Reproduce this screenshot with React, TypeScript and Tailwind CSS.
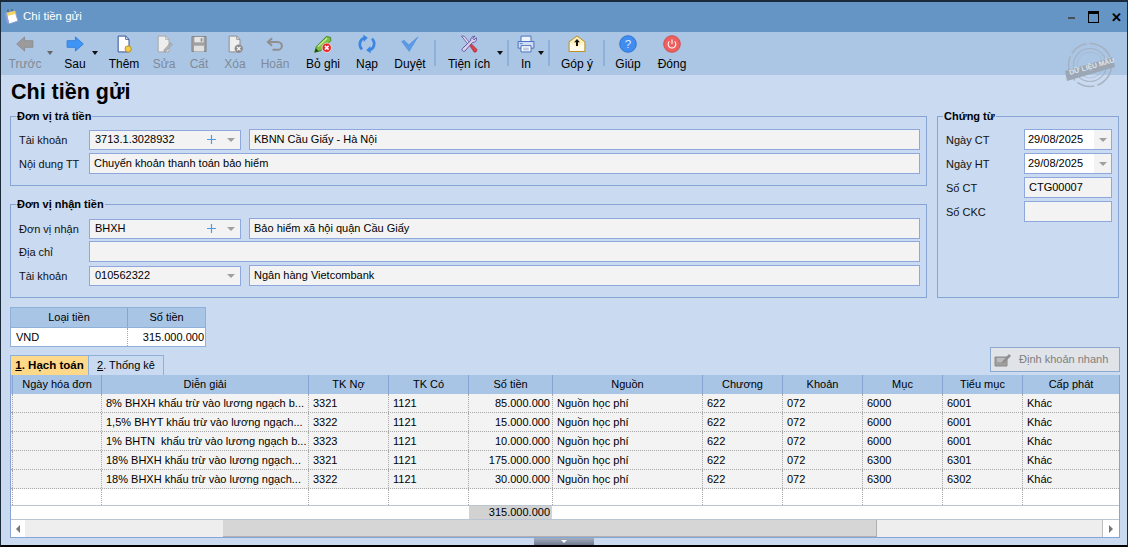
import type { ReactNode } from 'react';

const font = "[font-family:'Liberation_Sans',Arial,sans-serif]";

const Svg = ({ children }: { children: ReactNode }) => (
  <svg width="20" height="20" viewBox="0 0 24 24" fill="none">
    {children}
  </svg>
);

const icons: Record<string, ReactNode> = {
  prev: <Svg><path d="M2 12 11.5 3.5V8H21.5V16H11.5V20.5Z" fill="#9b9b9b" stroke="#8a8a8a" /></Svg>,
  next: <Svg><path d="M22 12 12.5 3.5V8H2.5V16H12.5V20.5Z" fill="#3f95f5" stroke="#2b7bd8" /></Svg>,
  add: (
    <Svg>
      <path d="M5 2.5H14L18 6.5V21.5H5Z" fill="#fff" stroke="#34509a" strokeWidth="1.2" />
      <path d="M14 2.5V6.5H18" stroke="#34509a" />
      <circle cx="17" cy="18" r="3.8" fill="#f4cb4c" stroke="#a98a20" />
    </Svg>
  ),
  edit: (
    <Svg>
      <path d="M5 2.5H14L18 6.5V21.5H5Z" fill="#eeeeee" stroke="#a8a8a8" strokeWidth="1.2" />
      <path d="M14 2.5V6.5H18" stroke="#a8a8a8" />
      <path d="M12 19 20 10.5 22 12.5 14 21H12Z" fill="#b5b5b5" stroke="#8f8f8f" strokeWidth=".7" />
    </Svg>
  ),
  save: (
    <Svg>
      <path d="M3.5 3H20.5V21H3.5Z" fill="#a0a0a0" stroke="#7e7e7e" />
      <path d="M6.5 3.5H17.5V10H6.5Z" fill="#e6e6e6" />
      <path d="M6 14H18V21H6Z" fill="#e0e0e0" />
      <path d="M14 5H16V9H14Z" fill="#8a8a8a" />
    </Svg>
  ),
  del: (
    <Svg>
      <path d="M5 2.5H14L18 6.5V21.5H5Z" fill="#eeeeee" stroke="#8d8d8d" strokeWidth="1.2" />
      <path d="M14 2.5V6.5H18" stroke="#8d8d8d" />
      <circle cx="16.5" cy="17.5" r="5" fill="#8c8c8c" />
      <path d="M14.4 15.4 18.6 19.6M18.6 15.4 14.4 19.6" stroke="#fff" strokeWidth="1.4" />
    </Svg>
  ),
  undo: (
    <Svg>
      <path d="M8.5 5 3.5 9.5 8.5 14" stroke="#8f8f8f" strokeWidth="2.4" />
      <path d="M4.5 9.5H15C22 9.5 22 19 15 19H9" stroke="#8f8f8f" strokeWidth="2.4" />
    </Svg>
  ),
  cancel: (
    <Svg>
      <path d="M2 22 4 15 16 3 21 4 21.5 8 9.5 20Z" fill="#7cc142" stroke="#3f7a1d" strokeWidth="1" />
      <path d="M6 15 17 5" stroke="#cdeb9f" strokeWidth="1.5" />
      <path d="M2 22 3.4 17 7 20.6Z" fill="#26450f" />
      <circle cx="16.5" cy="16.5" r="5.6" fill="#e8202a" stroke="#fff" strokeWidth=".8" />
      <path d="M14.3 14.3 18.7 18.7M18.7 14.3 14.3 18.7" stroke="#fff" strokeWidth="1.9" />
    </Svg>
  ),
  reload: (
    <Svg>
      <path d="M6 18.5C1.5 14 3 7 8.5 4.8" stroke="#3b86e3" strokeWidth="3.2" />
      <path d="M7.5 1 13 4.5 8 9.5Z" fill="#3b86e3" />
      <path d="M18 5.5C22.5 10 21 17 15.5 19.2" stroke="#3b86e3" strokeWidth="3.2" />
      <path d="M16.5 23 11 19.5 16 14.5Z" fill="#3b86e3" />
    </Svg>
  ),
  check: <Svg><path d="M2 9 5 7.5 10.5 13 21.5 3.5 11 21Z" fill="#5a9ae6" stroke="#4a88d6" strokeWidth=".6" /></Svg>,
  tools: (
    <Svg>
      <path d="M3 2.5 6 2.5 13 10.5 11 12.5Z" fill="#e6e0f6" stroke="#564291" strokeWidth=".9" />
      <path d="M19 2.5 16.5 5.5 18 7 20.8 4.5C22 8 19 10.5 16.5 10L7 20.5C5.5 22 2.5 19.5 4 17.5L14 8C13.5 5 16 2.5 19 2.5Z" fill="#d9cff0" stroke="#564291" strokeWidth="1" />
      <path d="M13 14 15 12 21.5 18.5C22 21 19.5 22.5 18 21.5Z" fill="#df3f4a" stroke="#8f2029" strokeWidth=".7" />
    </Svg>
  ),
  print: (
    <Svg>
      <path d="M6 2.5H18V9H6Z" fill="#eef3fc" stroke="#4b72c0" strokeWidth="1.2" />
      <path d="M2.5 9H21.5V17H2.5Z" fill="#cfdcf3" stroke="#4b72c0" strokeWidth="1.2" />
      <path d="M6 14H18V21.5H6Z" fill="#fff" stroke="#4b72c0" strokeWidth="1.2" />
      <path d="M8.5 17H15.5M8.5 19H15.5" stroke="#8aa0c8" />
      <path d="M4.5 11.5H8" stroke="#4b72c0" />
    </Svg>
  ),
  feedback: (
    <Svg>
      <path d="M2.5 9.5 12 2.5 21.5 9.5V21H2.5Z" fill="#fffbe8" stroke="#bd9428" strokeWidth="1.3" />
      <path d="M3.5 9.8 12 3.6 20.5 9.8 12 15.5Z" fill="#fff1b8" />
      <path d="M12 6 15.5 10H13.2V14.5H10.8V10H8.5Z" fill="#111" />
    </Svg>
  ),
  help: (
    <Svg>
      <circle cx="12" cy="12" r="10" fill="#3f8df0" stroke="#2b6dc4" />
      <text x="12" y="17" textAnchor="middle" fontSize="14" fill="#dbeaff" fontFamily="Liberation Sans">?</text>
    </Svg>
  ),
  close: (
    <Svg>
      <circle cx="12" cy="12" r="10" fill="#ee5f5f" stroke="#d04545" />
      <path d="M8.8 8.8A4.6 4.6 0 1 0 15.2 8.8" stroke="#fff" strokeWidth="1.3" />
      <path d="M12 6.5V12" stroke="#fff" strokeWidth="1.3" />
    </Svg>
  ),
};

const Caret = ({ className, off }: { className: string; off?: boolean }) => (
  <div className={`flex justify-center pt-[19px] ${className}`}>
    <div className={`h-0 w-0 border-x-[3.5px] border-t-[4px] border-x-transparent ${off ? 'border-t-[#666]' : 'border-t-[#111]'}`} />
  </div>
);

const Sep = ({ className = '' }: { className?: string }) => (
  <div className={`my-[8px] h-[26px] w-[2px] bg-[#8fb0d8] ${className}`} />
);

const ToolButton = ({ icon, label, off, className }: { icon: string; label: string; off?: boolean; className: string }) => (
  <div className={`flex flex-col items-center ${className}`}>
    <div className="flex h-[24px] items-center justify-center">{icons[icon]}</div>
    <span className={`mt-[1px] text-[12px] leading-[14px] whitespace-nowrap ${off ? 'text-[#7f8a96]' : 'text-black'}`}>{label}</span>
  </div>
);

const Stamp = () => (
  <div className="absolute left-[1063px] top-[40px] h-[46px] w-[52px]">
    <svg width="52" height="46" viewBox="0 0 52 46" fill="none">
      <circle cx="26" cy="23" r="21.5" stroke="#a3adba" strokeWidth="1.5" strokeDasharray="26 3 18 3" opacity=".85" />
      <circle cx="26" cy="23" r="16.5" stroke="#a3adba" strokeWidth="1.2" opacity=".8" />
      <circle cx="26" cy="23" r="13" stroke="#a3adba" strokeWidth=".8" opacity=".6" />
      <path d="M1 29 49 15 51 25 3 39Z" fill="#9ca7b5" />
      <text x="6" y="33" transform="rotate(-16 6 33)" fontSize="7" fontWeight="700" fill="#dfe5ec" fontFamily="Liberation Sans">DỮ LIỆU MẪU</text>
    </svg>
  </div>
);

const Input = ({ value = '', className = '' }: { value?: string; className?: string }) => (
  <div className={`flex h-[21px] items-center border border-[#8ea7dd] bg-[#f3f3f3] pl-[4px] text-[11px] text-black ${className}`}>{value}</div>
);

const Combo = ({ value, plus }: { value: string; plus?: boolean }) => (
  <div className="flex h-[20px] w-[152px] items-center border border-[#8ea7dd] bg-[#f3f3f3] pl-[5px] text-[11px]">
    <span className="flex-1">{value}</span>
    {plus && (
      <svg width="9" height="9" viewBox="0 0 9 9" className="mr-[11px]">
        <path d="M4.5 0V9M0 4.5H9" stroke="#4f9be3" strokeWidth="1.2" />
      </svg>
    )}
    <div className="mr-[5px] h-0 w-0 border-x-[4px] border-t-[4px] border-x-transparent border-t-[#a0a0a0]" />
  </div>
);

const Label = ({ children, className = 'w-[70px]' }: { children: ReactNode; className?: string }) => (
  <span className={`shrink-0 whitespace-nowrap pt-[2px] text-[11px] text-[#111] ${className}`}>{children}</span>
);

const Group = ({ title, className, children }: { title: string; className: string; children: ReactNode }) => (
  <fieldset className={`border border-[#86a5d5] ${className}`}>
    <legend className="ml-[-3px] h-[14px] px-[1px] text-[11px] font-bold leading-[14px] text-black">{title}</legend>
    {children}
  </fieldset>
);

const DateBox = ({ value }: { value: string }) => (
  <div className="flex h-[21px] w-[88px] items-center border border-[#8ea7dd] bg-white text-[11px]">
    <span className="flex h-full flex-1 items-center pl-[3px]">{value}</span>
    <div className="flex h-full w-[17px] items-center justify-center bg-[#f3f3f3]">
      <div className="h-0 w-0 border-x-[4px] border-t-[4px] border-x-transparent border-t-[#a0a0a0]" />
    </div>
  </div>
);

const columns = [
  { title: 'Ngày hóa đơn', width: 'w-[89px]' },
  { title: 'Diễn giải', width: 'w-[207px]' },
  { title: 'TK Nợ', width: 'w-[80px]' },
  { title: 'TK Có', width: 'w-[80px]' },
  { title: 'Số tiền', width: 'w-[84px]', right: true },
  { title: 'Nguồn', width: 'w-[150px]' },
  { title: 'Chương', width: 'w-[80px]' },
  { title: 'Khoản', width: 'w-[80px]' },
  { title: 'Mục', width: 'w-[80px]' },
  { title: 'Tiểu mục', width: 'w-[80px]' },
  { title: 'Cấp phát', width: 'w-[96px]' },
];

const rows = [
  ['', '8% BHXH khấu trừ vào lương ngạch b...', '3321', '1121', '85.000.000', 'Nguồn học phí', '622', '072', '6000', '6001', 'Khác'],
  ['', '1,5% BHYT khấu trừ vào lương ngạch...', '3322', '1121', '15.000.000', 'Nguồn học phí', '622', '072', '6000', '6001', 'Khác'],
  ['', '1% BHTN  khấu trừ vào lương ngạch b...', '3323', '1121', '10.000.000', 'Nguồn học phí', '622', '072', '6000', '6001', 'Khác'],
  ['', '18% BHXH khấu trừ vào lương ngạch...', '3321', '1121', '175.000.000', 'Nguồn học phí', '622', '072', '6300', '6301', 'Khác'],
  ['', '18% BHXH khấu trừ vào lương ngạch...', '3322', '1121', '30.000.000', 'Nguồn học phí', '622', '072', '6300', '6302', 'Khác'],
];

const GridRow = ({ cells, blank }: { cells: string[]; blank?: boolean }) => (
  <div className={`flex border-b border-dotted border-[#a8a8a8] ${blank ? 'h-[16px] border-b-0 bg-white' : 'h-[19px] bg-[#f3f3f3]'}`}>
    <div className="w-[2px] shrink-0 border-r border-dotted border-[#a8a8a8]" />
    {columns.map((col, i) => (
      <div
        key={col.title}
        className={`flex shrink-0 items-center overflow-hidden whitespace-pre border-r border-dotted border-[#a8a8a8] pl-[4px] pt-[1px] text-[11px] text-black ${col.width} ${col.right ? 'justify-end pr-[2px]' : 'pr-[1px]'} ${i === columns.length - 1 ? 'border-r-0' : ''}`}
      >
        {cells[i]}
      </div>
    ))}
  </div>
);

export default function App() {
  return (
    <div className={`relative flex h-[547px] w-[1128px] flex-col overflow-hidden border-x border-t-2 border-b-2 border-x-[#1b2a3a] border-t-[#1b2a3a] border-b-black bg-[#c9daf1] ${font}`}>
      {/* Title bar */}
      <div className="flex h-[30px] shrink-0 items-center bg-[#6495c5] pl-[3px] pr-[5px]">
        <svg width="15" height="16" viewBox="0 0 15 16" fill="none">
          <path d="M2 4 11 2 14 12 5 15Z" fill="#fff" stroke="#8b9fd0" />
          <path d="M2 4 11 2 11.8 5 2.8 7Z" fill="#f3d65f" />
          <path d="M3 14 1 5 3 4 5 15Z" fill="#8f9fdc" />
          <path d="M4 3V0.5M8 2V0" stroke="#4a4f68" />
        </svg>
        <span className="ml-[4px] flex-1 text-[11.5px] text-white">Chi tiền gửi</span>
        <div className="mr-[13px] mt-[1px] h-[2px] w-[7px] bg-[#4a4f58]" />
        <div className="mr-[12px] h-[12px] w-[11px] border border-t-[3px] border-black" />
        <span className="text-[13px] font-bold leading-none text-black">✕</span>
      </div>

      {/* Toolbar */}
      <div className="flex h-[43px] shrink-0 bg-[#abc6e5] pl-[4px]">
        <ToolButton icon="prev" label="Trước" off className="w-[40px]" />
        <Caret off className="w-[10px]" />
        <ToolButton icon="next" label="Sau" className="ml-[5px] w-[30px]" />
        <Caret className="w-[10px]" />
        <ToolButton icon="add" label="Thêm" className="w-[48px]" />
        <ToolButton icon="edit" label="Sửa" off className="w-[32px]" />
        <ToolButton icon="save" label="Cất" off className="w-[38px]" />
        <ToolButton icon="del" label="Xóa" off className="w-[34px]" />
        <ToolButton icon="undo" label="Hoãn" off className="w-[46px]" />
        <ToolButton icon="cancel" label="Bỏ ghi" className="w-[50px]" />
        <ToolButton icon="reload" label="Nạp" className="w-[38px]" />
        <ToolButton icon="check" label="Duyệt" className="w-[48px]" />
        <Sep />
        <ToolButton icon="tools" label="Tiện ích" className="ml-[7px] w-[52px]" />
        <Caret className="w-[10px]" />
        <Sep className="ml-[2px]" />
        <ToolButton icon="print" label="In" className="ml-[7px] w-[20px]" />
        <Caret className="w-[10px]" />
        <Sep className="ml-[2px]" />
        <ToolButton icon="feedback" label="Góp ý" className="ml-[1px] w-[52px]" />
        <Sep />
        <ToolButton icon="help" label="Giúp" className="w-[46px]" />
        <ToolButton icon="close" label="Đóng" className="w-[42px]" />
      </div>

      <div className="flex min-h-0 flex-1 flex-col pl-[9px] pr-[7px]">
        <h1 className="ml-[1px] h-[34px] text-[21.5px] font-bold leading-[34px] text-black">Chi tiền gửi</h1>

        <div className="flex gap-[10px]">
          <div className="w-[917px] shrink-0">
            <Group title="Đơn vị trả tiền" className="h-[77px] pl-[8px] pr-[6px]">
              <div className="mt-[6px] flex h-[21px] items-center">
                <Label>Tài khoản</Label>
                <Combo value="3713.1.3028932" plus />
                <Input value="KBNN Cầu Giấy - Hà Nội" className="ml-[8px] flex-1" />
              </div>
              <div className="mt-[3px] flex items-center">
                <Label>Nội dung TT</Label>
                <Input value="Chuyển khoản thanh toán bảo hiểm" className="flex-1" />
              </div>
            </Group>
            <Group title="Đơn vị nhận tiền" className="mt-[11px] h-[101px] pl-[8px] pr-[6px]">
              <div className="mt-[7px] flex h-[21px] items-center">
                <Label>Đơn vị nhận</Label>
                <Combo value="BHXH" plus />
                <Input value="Bảo hiểm xã hội quận Cầu Giấy" className="ml-[8px] flex-1" />
              </div>
              <div className="mt-[2px] flex items-center">
                <Label>Địa chỉ</Label>
                <Input className="flex-1" />
              </div>
              <div className="mt-[3px] flex items-center">
                <Label>Tài khoản</Label>
                <Combo value="010562322" />
                <Input value="Ngân hàng Vietcombank" className="ml-[8px] flex-1" />
              </div>
            </Group>
          </div>

          <Group title="Chứng từ" className="h-[189px] w-[182px] shrink-0 pl-[8px]">
            <div className="mt-[6px] flex flex-col gap-[3px]">
              <div className="flex items-center">
                <Label className="w-[78px]">Ngày CT</Label>
                <DateBox value="29/08/2025" />
              </div>
              <div className="flex items-center">
                <Label className="w-[78px]">Ngày HT</Label>
                <DateBox value="29/08/2025" />
              </div>
              <div className="flex items-center">
                <Label className="w-[78px]">Số CT</Label>
                <Input value="CTG00007" className="w-[88px]" />
              </div>
              <div className="flex items-center">
                <Label className="w-[78px]">Số CKC</Label>
                <Input className="w-[88px]" />
              </div>
            </div>
          </Group>
        </div>

        {/* Currency */}
        <div className="mt-[9px] w-[196px] border border-[#8fb0d8] text-[11px]">
          <div className="flex h-[19px] bg-[#a9c5e6]">
            <div className="flex w-[117px] items-center justify-center border-r border-[#86a5d5]">Loại tiền</div>
            <div className="flex flex-1 items-center justify-center">Số tiền</div>
          </div>
          <div className="flex h-[19px] border-t border-[#8fb0d8] bg-white">
            <div className="flex w-[117px] items-center border-r border-dotted border-[#a8a8a8] pl-[5px]">VND</div>
            <div className="flex flex-1 items-center justify-end pr-[1px]">315.000.000</div>
          </div>
        </div>

        {/* Tabs + action */}
        <div className="flex h-[28px] shrink-0 items-end justify-between">
          <div className="flex h-[20px] border-x border-t border-[#8fb0d8] text-[11px]">
            <div className="flex w-[77px] items-center justify-center bg-[#ffd98a] text-[11.5px] font-bold">
              <span><u>1</u>. Hạch toán</span>
            </div>
            <div className="flex w-[75px] items-center justify-center border-l border-[#8fb0d8]">
              <span><u>2</u>. Thống kê</span>
            </div>
          </div>
          <div className="mb-[3px] flex h-[25px] w-[130px] items-center gap-[7px] border border-[#8ca9d0] bg-[#e0e3e8] pl-[3px] text-[11px] text-[#808080]">
            <svg width="18" height="16" viewBox="0 0 18 16" fill="none">
              <path d="M1 5H13V14H1Z" fill="#a0a0a0" stroke="#8a8a8a" />
              <path d="M3 7H11M3 9H9" stroke="#d8d8d8" />
              <path d="M8 10 15 2 17 4 10 11H8Z" fill="#8f8f8f" />
            </svg>
            <span>Định khoản nhanh</span>
          </div>
        </div>

        {/* Grid */}
        <div className="flex h-[163px] w-[1110px] shrink-0 flex-col border-x border-b border-[#86a5d5] bg-white">
          <div className="flex h-[19px] shrink-0 bg-[#a9c5e6]">
            <div className="w-[2px] shrink-0 border-r border-[#86a5d5]" />
            {columns.map((col, i) => (
              <div
                key={col.title}
                className={`flex shrink-0 items-center justify-center border-r border-[#86a5d5] text-[11px] text-black ${col.width} ${i === columns.length - 1 ? 'border-r-0' : ''}`}
              >
                {col.title}
              </div>
            ))}
          </div>
          {rows.map((cells, i) => (
            <GridRow key={i} cells={cells} />
          ))}
          <GridRow cells={['', '', '', '', '', '', '', '', '', '', '']} blank />

          {/* Totals */}
          <div className="flex h-[15px] shrink-0 border-y border-[#b9c6d2] bg-white text-[11px]">
            <div className="w-[458px] shrink-0" />
            <div className="flex w-[83px] shrink-0 items-center justify-end bg-[#d2d2d2] pr-[2px]">315.000.000</div>
          </div>

          {/* Horizontal scrollbar */}
          <div className="flex min-h-0 flex-1 bg-[#eeeeee]">
            <div className="flex w-[14px] shrink-0 items-center justify-center bg-white">
              <div className="h-0 w-0 border-y-[4px] border-r-[4px] border-y-transparent border-r-[#777]" />
            </div>
            <div className="w-[198px] shrink-0" />
            <div className="w-[654px] shrink-0 border-r border-b border-[#b0b0b0] bg-[#d6d6d6]" />
            <div className="flex-1" />
            <div className="flex w-[17px] shrink-0 items-center justify-center border-l border-[#c0c0c0] bg-white">
              <div className="h-0 w-0 border-y-[4px] border-l-[4px] border-y-transparent border-l-[#777]" />
            </div>
          </div>
        </div>

        {/* Splitter grip */}
        <div className="flex h-[7px] shrink-0 justify-center pr-[2px]">
          <div className="flex h-[7px] w-[60px] items-center justify-center bg-gradient-to-b from-[#a4afc0] to-[#6f7a8e]">
            <div className="h-0 w-0 border-x-[3px] border-t-[3px] border-x-transparent border-t-white" />
          </div>
        </div>
      </div>

      <Stamp />
    </div>
  );
}
